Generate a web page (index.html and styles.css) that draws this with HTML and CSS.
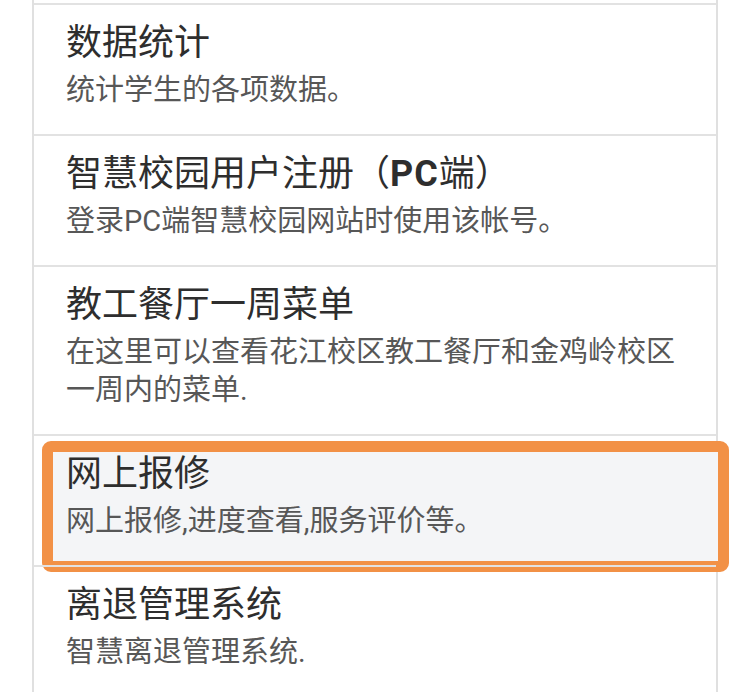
FILE: index.html
```html
<!doctype html>
<html lang="zh-CN">
  <head>
    <meta charset="UTF-8" />
    <meta name="viewport" content="width=device-width, initial-scale=1.0" />
    <title>应用列表</title>
    <link rel="stylesheet" href="styles.css">
  </head>
  <body>
    <div class="list">
      <div class="stub"></div>
      <div class="item">
        <div class="title">数据统计</div>
        <div class="desc">统计学生的各项数据。</div>
      </div>
      <div class="item">
        <div class="title">智慧校园用户注册（<b>PC</b>端）</div>
        <div class="desc">登录PC端智慧校园网站时使用该帐号。</div>
      </div>
      <div class="item">
        <div class="title">教工餐厅一周菜单</div>
        <div class="desc">在这里可以查看花江校区教工餐厅和金鸡岭校区一周内的菜单.</div>
      </div>
      <div class="item active">
        <span class="highlight"></span>
        <div class="title">网上报修</div>
        <div class="desc">网上报修,进度查看,服务评价等。</div>
      </div>
      <div class="item">
        <div class="title">离退管理系统</div>
        <div class="desc">智慧离退管理系统.</div>
      </div>
    </div>
  </body>
</html>
```

FILE: styles.css
```css
* {
  margin: 0;
  padding: 0;
  box-sizing: border-box;
}
body {
  background: #fff;
  font-family: Roboto, "Noto Sans CJK SC", sans-serif;
  overflow: hidden;
  height: 692px;
}
.list {
  margin-left: 32px;
  width: 686px;
  border-left: 2px solid #e0e0e0;
  border-right: 2px solid #e0e0e0;
}
.stub {
  height: 3px;
}
.item {
  position: relative;
  border-top: 2px solid #e2e2e2;
  padding: 15px 20px 25px 32px;
}
.title {
  position: relative;
  z-index: 1;
  font-size: 36px;
  line-height: 46px;
  color: #2e2e2e;
  margin-bottom: 5px;
  white-space: nowrap;
}
.title b {
  font-weight: 700;
  letter-spacing: 1px;
}
.desc {
  position: relative;
  z-index: 1;
  font-size: 29px;
  line-height: 38px;
  color: #575757;
}
.highlight {
  position: absolute;
  left: 8px;
  top: 5px;
  width: 687px;
  height: 131px;
  border: 11px solid #f29146;
  border-radius: 9px;
  background: #f4f5f7;
  z-index: 0;
}
```
